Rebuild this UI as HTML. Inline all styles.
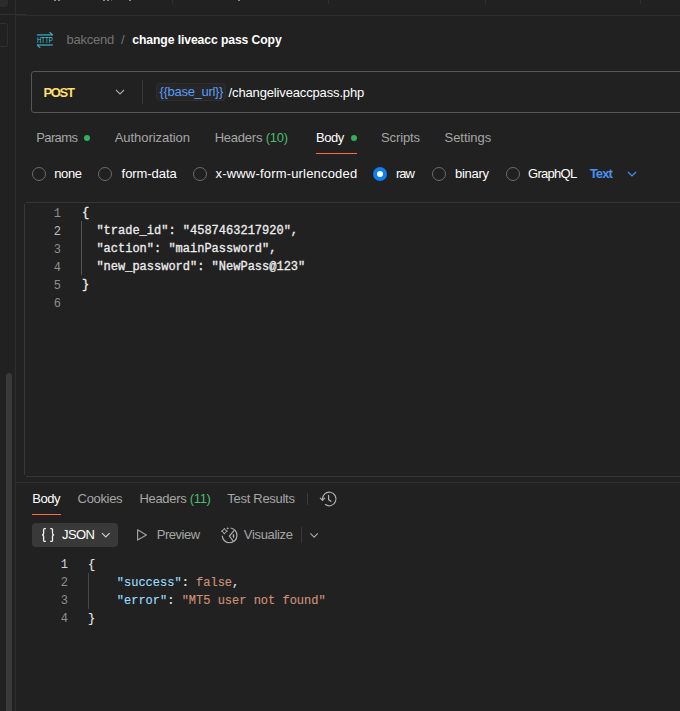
<!DOCTYPE html>
<html><head><meta charset="utf-8">
<style>
*{margin:0;padding:0;box-sizing:border-box}
html,body{width:680px;height:711px;overflow:hidden;background:#212121;font-family:"Liberation Sans",sans-serif;color:#fff}
.a{position:absolute;white-space:nowrap;line-height:15px;font-size:13px}
.mono{font-family:"Liberation Mono",monospace;white-space:pre;font-size:12px;line-height:18px;-webkit-text-stroke:0.3px}
.sec{color:#a6a6a6}
.rd{position:absolute;width:14px;height:14px;border:1px solid #6b6b6b;border-radius:50%}
svg.a{line-height:0}
</style></head><body>
<!-- left sidebar strip -->
<div class="a" style="left:0;top:-4px;width:8px;height:11px;background:#2b2b2b;border-radius:0 4px 4px 0"></div>
<div class="a" style="left:-5px;top:23px;width:13px;height:24px;border:1px solid #2e2e2e;border-radius:2px"></div>
<div class="a" style="left:15px;top:0;width:1px;height:711px;background:#2e2e2e"></div>
<div class="a" style="left:6px;top:373px;width:6px;height:345px;background:#3a3a3a;border-radius:3px"></div>
<!-- top tabs bar -->
<div class="a" style="left:0;top:14px;width:26px;height:1px;background:#303030"></div>
<div class="a" style="left:16px;top:15px;width:10px;height:1px;background:#2a2a2a"></div>
<div class="a" style="left:26px;top:15px;width:654px;height:1px;background:#2e2e2e"></div>
<div class="a" style="left:172px;top:0;width:1px;height:4px;background:#303030"></div>
<div class="a" style="left:328px;top:0;width:1px;height:4px;background:#303030"></div>
<div class="a" style="left:485px;top:0;width:1px;height:4px;background:#303030"></div>
<div class="a" style="left:640px;top:0;width:1px;height:4px;background:#303030"></div>

<div class="a" style="left:54px;top:0;width:2px;height:1px;background:#909090"></div>
<div class="a" style="left:58px;top:0;width:2px;height:1px;background:#909090"></div>
<div class="a" style="left:103px;top:0;width:2px;height:1px;background:#8a8a8a"></div>
<div class="a" style="left:107px;top:0;width:2px;height:1px;background:#8a8a8a"></div>
<div class="a" style="left:111px;top:0;width:1px;height:1px;background:#555"></div>
<div class="a" style="left:129px;top:0;width:2px;height:1px;background:#8a8a8a"></div>
<div class="a" style="left:238px;top:0;width:2px;height:1px;background:#8a8a8a"></div>
<!-- breadcrumb -->
<svg class="a" style="left:36px;top:31px" width="18" height="18" viewBox="0 0 18 18">
  <path d="M1 3.9H16.8" stroke="#3797a3" stroke-width="1.5" fill="none"/>
  <path d="M13.6 1.2L16.6 4" stroke="#3aa9b8" stroke-width="1.3" fill="none"/>
  <path d="M1 14H16.8" stroke="#3797a3" stroke-width="1.5" fill="none"/>
  <path d="M1.2 14L4.2 16.9" stroke="#3aa9b8" stroke-width="1.3" fill="none"/>
  <text x="8.9" y="11.9" text-anchor="middle" font-family="Liberation Sans" font-size="8.4" fill="#44c8dc" textLength="16" lengthAdjust="spacingAndGlyphs">HTTP</text>
</svg>
<div id="t_bak" class="a" style="left:66.5px;top:32px;color:#747474;letter-spacing:-0.25px">bakcend</div>
<div id="t_sl" class="a" style="left:121px;top:32px;color:#747474;letter-spacing:0px">/</div>
<div id="t_chg" class="a" style="left:132.3px;top:32.5px;font-weight:bold;font-size:12.2px;letter-spacing:-0.1px">change liveacc pass Copy</div>

<!-- url box -->
<div class="a" style="left:31px;top:71px;width:700px;height:42px;border:1px solid #565656;border-radius:3px"></div>
<div id="t_post" class="a" style="left:43.4px;top:85px;font-weight:bold;color:#ffdf70;letter-spacing:-1.3px">POST</div>
<svg class="a" style="left:114px;top:87px" width="12" height="10" viewBox="0 0 12 10"><path d="M2 3L6 7L10 3" stroke="#a6a6a6" stroke-width="1.2" fill="none"/></svg>
<div class="a" style="left:142px;top:80px;width:1px;height:24px;background:#3a3a3a"></div>
<div class="a" style="left:156px;top:83px;width:70px;height:18px;background:#262626;border:1px solid #2e2e2e;border-radius:4px"></div>
<div id="t_base" class="a" style="left:159.5px;top:84px;color:#5b9cf8;letter-spacing:-0.3px">{{base_url}}</div>
<div id="t_path" class="a" style="left:228.6px;top:85px;color:#fff;letter-spacing:-0.148px">/changeliveaccpass.php</div>

<!-- request tabs -->
<div id="t_params" class="a sec" style="left:36.2px;top:130px;letter-spacing:-0.6px">Params</div>
<div class="a" style="left:84px;top:135px;width:6px;height:6px;border-radius:3px;background:#2fb35a"></div>
<div id="t_auth" class="a sec" style="left:114.7px;top:130px;letter-spacing:-0.05px">Authorization</div>
<div id="t_hdr" class="a sec" style="left:214.7px;top:130px;letter-spacing:-0.227px">Headers <span style="color:#4bbd6e">(10)</span></div>
<div id="t_body" class="a" style="left:315.9px;top:130px;letter-spacing:-0.433px">Body</div>
<div class="a" style="left:351px;top:135px;width:6px;height:6px;border-radius:3px;background:#2fb35a"></div>
<div class="a" style="left:316px;top:153px;width:41px;height:1px;background:#ff6c37"></div>
<div id="t_scr" class="a sec" style="left:380.9px;top:130px;letter-spacing:-0.083px">Scripts</div>
<div id="t_set" class="a sec" style="left:444.5px;top:130px;letter-spacing:-0.043px">Settings</div>

<!-- body type radios -->
<div class="rd" style="left:32px;top:167px"></div>
<div id="t_none" class="a" style="left:54.2px;top:166px;letter-spacing:-0.367px">none</div>
<div class="rd" style="left:98px;top:167px"></div>
<div id="t_form" class="a" style="left:121.6px;top:166px;letter-spacing:-0.062px">form-data</div>
<div class="rd" style="left:193px;top:167px"></div>
<div id="t_xw" class="a" style="left:215.5px;top:166px;letter-spacing:0.185px">x-www-form-urlencoded</div>
<div class="a" style="left:373px;top:167px;width:14px;height:14px;border-radius:7px;background:#0c7ff2"></div>
<div class="a" style="left:377px;top:171px;width:6px;height:6px;border-radius:3px;background:#fff"></div>
<div id="t_raw" class="a" style="left:395.9px;top:166px;letter-spacing:-0.95px">raw</div>
<div class="rd" style="left:432px;top:167px"></div>
<div id="t_bin" class="a" style="left:454.9px;top:166px;letter-spacing:-0.24px">binary</div>
<div class="rd" style="left:506px;top:167px"></div>
<div id="t_gql" class="a" style="left:528px;top:166px;letter-spacing:-0.717px">GraphQL</div>
<div id="t_text" class="a" style="left:589.8px;top:166px;font-weight:bold;color:#4a90f0;letter-spacing:-0.9px">Text</div>
<svg class="a" style="left:626px;top:169px" width="12" height="10" viewBox="0 0 12 10"><path d="M2 3L6 7L10 3" stroke="#4a90f0" stroke-width="1.2" fill="none"/></svg>

<!-- editor -->
<div class="a" style="left:26px;top:202px;width:654px;height:1px;background:#363636"></div>
<div class="a" style="left:24px;top:204px;width:1px;height:271px;background:#363636"></div>
<div class="a" style="left:26px;top:476px;width:654px;height:1px;background:#363636"></div>
<div class="a mono" style="left:41px;top:205px;width:20px;text-align:right;color:#8f8f8f;-webkit-text-stroke:0">1<br><span style="color:#bdbdbd">2</span><br>3<br>4<br>5<br>6</div>
<div class="a" style="left:81px;top:221px;width:1px;height:54px;background:#555"></div>
<div class="a mono" style="left:82px;top:204px;color:#ededed">{<br>  "trade_id": "4587463217920",<br>  "action": "mainPassword",<br>  "new_password": "NewPass@123"<br>}</div>

<!-- response -->
<div class="a" style="left:16px;top:482px;width:680px;height:1px;background:#303030"></div>
<div id="t_rbody" class="a" style="left:32.3px;top:491px;letter-spacing:-0.467px">Body</div>
<div class="a" style="left:32px;top:514px;width:29px;height:1px;background:#ff6c37"></div>
<div id="t_cook" class="a sec" style="left:77.6px;top:491px;letter-spacing:-0.333px">Cookies</div>
<div id="t_rhdr" class="a sec" style="left:139.4px;top:491px;letter-spacing:-0.309px">Headers <span style="color:#4bbd6e">(11)</span></div>
<div id="t_test" class="a sec" style="left:227.3px;top:491px;letter-spacing:-0.291px">Test Results</div>
<div class="a" style="left:307px;top:493px;width:1px;height:12px;background:#3a3a3a"></div>

<div class="a" style="left:32px;top:523px;width:86px;height:24px;background:#393939;border-radius:4px"></div>
<div id="t_json" class="a" style="left:62.1px;top:527px;color:#fff;letter-spacing:-0.633px">JSON</div>
<div id="t_prev" class="a sec" style="left:156.7px;top:527px;letter-spacing:-0.483px">Preview</div>
<div id="t_vis" class="a sec" style="left:243.8px;top:527px;letter-spacing:-0.325px">Visualize</div>
<div class="a" style="left:301px;top:527px;width:1px;height:16px;background:#3a3a3a"></div>

<div class="a mono" style="left:48px;top:556px;width:20px;text-align:right;color:#8f8f8f;-webkit-text-stroke:0"><span style="color:#d6d6d6">1</span><br>2<br>3<br>4</div>
<div class="a" style="left:88px;top:573px;width:1px;height:36px;background:#484848"></div>
<div class="a mono" style="left:88px;top:556px;color:#e6e6e6;-webkit-text-stroke:0.15px">{<br>    <span style="color:#9cdcfe">"success"</span>: <span style="color:#ce9178">false</span>,<br>    <span style="color:#9cdcfe">"error"</span>: <span style="color:#ce9178">"MT5 user not found"</span><br>}</div>

<svg class="a" style="left:0;top:480px" width="680" height="80" viewBox="0 480 680 80">
  <!-- braces -->
  <path d="M45.9 528.6H44.6Q43.6 528.6 43.6 529.6V533.6Q43.6 534.9 42 534.9Q43.6 534.9 43.6 536.2V540.4Q43.6 541.4 44.6 541.4H45.9" stroke="#f2f2f2" stroke-width="1.3" fill="none"/>
  <path d="M50.2 528.6H51.5Q52.5 528.6 52.5 529.6V533.6Q52.5 534.9 54.1 534.9Q52.5 534.9 52.5 536.2V540.4Q52.5 541.4 51.5 541.4H50.2" stroke="#f2f2f2" stroke-width="1.3" fill="none"/>
  <!-- json chevron -->
  <path d="M102 533.2L105.8 537L109.6 533.2" stroke="#d0d0d0" stroke-width="1.2" fill="none"/>
  <!-- play -->
  <path d="M137.6 529.8L146.4 534.9L137.6 540.1Z" stroke="#a0a0a0" stroke-width="1.2" fill="none" stroke-linejoin="round"/>
  <!-- visualize -->
  <path d="M230.6 528A7.4 7.4 0 1 1 222.2 535.8" stroke="#b0b0b0" stroke-width="1.2" fill="none"/>
  <path d="M234.2 530.4L229.4 536L233.2 541" stroke="#b0b0b0" stroke-width="1.2" fill="none"/>
  <ellipse cx="233.5" cy="536" rx="0.8" ry="1.9" fill="#b0b0b0"/>
  <path d="M224.4 528.2Q224.9 530.7 227.4 531.2Q224.9 531.7 224.4 534.2Q223.9 531.7 221.4 531.2Q223.9 530.7 224.4 528.2Z" stroke="#b0b0b0" stroke-width="1" fill="none"/>
  <path d="M227.7 527.2L228.9 528.4L227.7 529.6L226.5 528.4Z" fill="#b0b0b0"/>
  <!-- vis chevron -->
  <path d="M310.4 533.4L314.1 537.1L317.8 533.4" stroke="#a6a6a6" stroke-width="1.2" fill="none"/>
  <!-- history -->
  <path d="M322.4 499.2A6.8 6.8 0 1 1 325.4 504.6" stroke="#b0b0b0" stroke-width="1.2" fill="none" stroke-linecap="round"/>
  <path d="M320.3 498.2L322.5 500.4L324.7 498.2" stroke="#b0b0b0" stroke-width="1.2" fill="none" stroke-linecap="round" stroke-linejoin="round"/>
  <path d="M328.6 495.4V499.6L330.9 501.3" stroke="#b0b0b0" stroke-width="1.2" fill="none" stroke-linecap="round"/>
</svg>
</body></html>
